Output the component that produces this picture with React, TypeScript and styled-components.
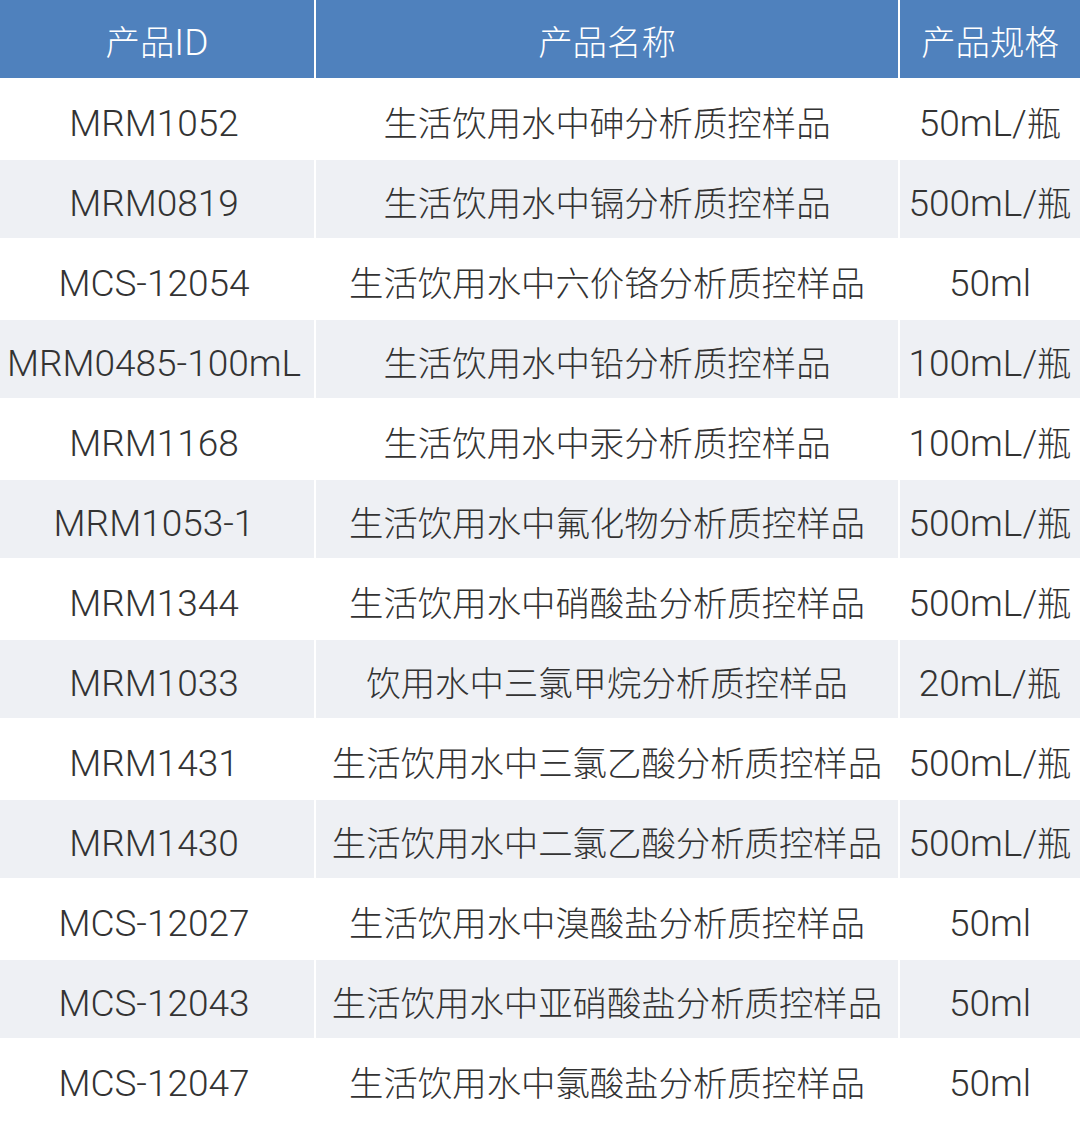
import styled, { createGlobalStyle } from 'styled-components';

const GlobalStyle = createGlobalStyle`
  html, body {
    margin: 0;
    padding: 0;
    background: #ffffff;
  }
  body {
    font-family: Roboto, "Noto Sans CJK SC", sans-serif;
  }
`;

const rows: [string, string, string][] = [
  ['MRM1052', '生活饮用水中砷分析质控样品', '50mL/瓶'],
  ['MRM0819', '生活饮用水中镉分析质控样品', '500mL/瓶'],
  ['MCS-12054', '生活饮用水中六价铬分析质控样品', '50ml'],
  ['MRM0485-100mL', '生活饮用水中铅分析质控样品', '100mL/瓶'],
  ['MRM1168', '生活饮用水中汞分析质控样品', '100mL/瓶'],
  ['MRM1053-1', '生活饮用水中氟化物分析质控样品', '500mL/瓶'],
  ['MRM1344', '生活饮用水中硝酸盐分析质控样品', '500mL/瓶'],
  ['MRM1033', '饮用水中三氯甲烷分析质控样品', '20mL/瓶'],
  ['MRM1431', '生活饮用水中三氯乙酸分析质控样品', '500mL/瓶'],
  ['MRM1430', '生活饮用水中二氯乙酸分析质控样品', '500mL/瓶'],
  ['MCS-12027', '生活饮用水中溴酸盐分析质控样品', '50ml'],
  ['MCS-12043', '生活饮用水中亚硝酸盐分析质控样品', '50ml'],
  ['MCS-12047', '生活饮用水中氯酸盐分析质控样品', '50ml'],
];

// latin and CJK runs get different sizes, like the source font pairing
function Mixed({ text }: { text: string }) {
  const parts = text.match(/[\u3400-\u9fff]+|[^\u3400-\u9fff]+/g) ?? [];
  return (
    <>
      {parts.map((part, i) =>
        /[\u3400-\u9fff]/.test(part) ? <Han key={i}>{part}</Han> : <Latin key={i}>{part}</Latin>
      )}
    </>
  );
}

export default function App() {
  return (
    <>
      <GlobalStyle />
      <Table>
        <HeadCell>
          <Mixed text="产品ID" />
        </HeadCell>
        <HeadCell>
          <Mixed text="产品名称" />
        </HeadCell>
        <HeadCell>
          <Mixed text="产品规格" />
        </HeadCell>
        {rows.map(([id, name, spec], i) => (
          <Row key={id} striped={i % 2 === 1}>
            <Cell shift={-3}>
              <Mixed text={id} />
            </Cell>
            <Cell>
              <Mixed text={name} />
            </Cell>
            <Cell>
              <Mixed text={spec} />
            </Cell>
          </Row>
        ))}
      </Table>
    </>
  );
}

const Table = styled.div`
  display: grid;
  grid-template-columns: 314px 582px 180px;
  column-gap: 2px;
  row-gap: 2px;
  width: 1080px;
`;

const HeadCell = styled.div`
  height: 78px;
  box-sizing: border-box;
  padding-top: 6px;
  display: flex;
  align-items: center;
  justify-content: center;
  background: #4f81bd;
  color: #ffffff;
  white-space: nowrap;
`;

const Row = styled.div<{ striped?: boolean }>`
  display: contents;

  & > div {
    background: ${(p) => (p.striped ? '#eef0f4' : '#ffffff')};
  }
`;

const Cell = styled.div<{ shift?: number }>`
  height: 78px;
  box-sizing: border-box;
  padding-top: 9px;
  padding-right: ${(p) => (p.shift ? `${-p.shift * 2}px` : '0')};
  display: flex;
  align-items: center;
  justify-content: center;
  color: #333333;
  white-space: nowrap;
`;

const Latin = styled.span`
  font-family: Roboto, "Noto Sans", sans-serif;
  font-weight: 300;
  font-size: 37px;
  line-height: 1;
`;

const Han = styled.span`
  font-family: "Noto Sans CJK SC", sans-serif;
  font-weight: 300;
  font-size: 34.4px;
  line-height: 1;
  margin-bottom: 4px;
`;
